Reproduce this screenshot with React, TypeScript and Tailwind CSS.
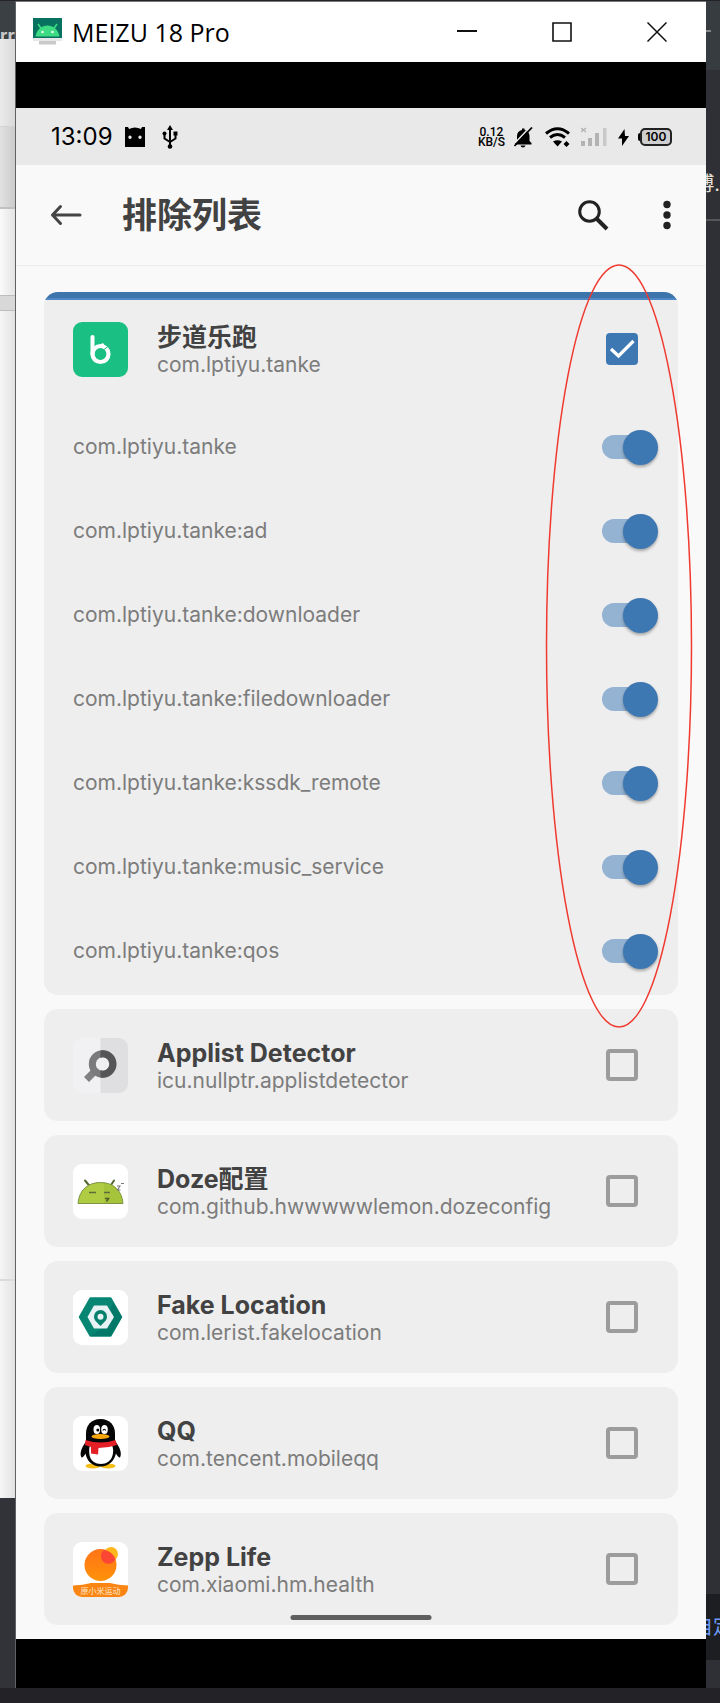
import React, { useState } from "react";

function TankeIcon() {
  return (
    <svg viewBox="0 0 55 55" className="h-[55px] w-[55px]" aria-hidden="true">
      <rect width="55" height="55" rx="9" fill="#1abf83" />
      <path d="M19.500 15v17" stroke="#fff" strokeWidth="4" strokeLinecap="round" />
      <circle cx="27.500" cy="32" r="8" fill="none" stroke="#fff" strokeWidth="4.200" />
      <path d="M27 22.500l3-1.500 2 3z" fill="#fff" />
      <path d="M31 27.500l4-3" stroke="#1abf83" strokeWidth="1" />
    </svg>
  );
}

function DetectorIcon() {
  return (
    <svg viewBox="0 0 55 55" className="h-[55px] w-[55px]" aria-hidden="true">
      <rect width="55" height="55" rx="9" fill="#f1f1f3" />
      <path d="M27.500 0H46a9 9 0 0 1 9 9v37a9 9 0 0 1-9 9H27.500z" fill="#dfdfe1" />
      <path d="M22.500 32.500L13.500 41.500" stroke="#818183" strokeWidth="7" />
      <circle cx="29.500" cy="26" r="10.200" fill="#f0f0f2" stroke="#7b7b7e" strokeWidth="7" />
      <path d="M27.500 12.500a13.700 13.700 0 1 1 0 27v-7.200a6.700 6.700 0 1 0 0-12.600z" fill="#555558" />
    </svg>
  );
}

function DozeIcon() {
  return (
    <svg viewBox="0 0 55 55" className="h-[55px] w-[55px]" aria-hidden="true">
      <rect width="55" height="55" rx="9" fill="#fff" />
      <path d="M12 16.500l5 6M41 16.500l-4 6" stroke="#55662f" strokeWidth="2" strokeLinecap="round" />
      <path d="M5 39.500C6 26 15 18.500 27.500 18.500S49 26 50 39.500z" fill="#b0cc42" stroke="#7d9445" strokeWidth="1" />
      <path d="M31 19c10 1 18 8 18.500 20H31z" fill="#98b832" opacity=".45" />
      <path d="M16 28.500h7M31 28.500h6" stroke="#5c6d39" strokeWidth="1.600" />
      <path d="M32 34.500h3.500l-2 3" fill="none" stroke="#4c5c24" strokeWidth="1.500" />
      <path d="M48 19.500h3M44 22h3l-2.500 4h3" fill="none" stroke="#777" strokeWidth="1.100" />
    </svg>
  );
}

function LocationIcon() {
  return (
    <svg viewBox="0 0 55 55" className="h-[55px] w-[55px]" aria-hidden="true">
      <rect width="55" height="55" rx="9" fill="#fff" />
      <path d="M17.500 8.500h20L48 27 37.500 45.500h-20L7 27z" fill="#068673" stroke="#068673" strokeWidth="2.500" strokeLinejoin="round" />
      <path d="M40 12l9 15-11 19H17l13-8z" fill="#00705f" opacity=".55" />
      <path d="M21 15.500h13L41 27l-7 11.500H21L14.500 27z" fill="#e6f2f3" />
      <path d="M27.500 20a6.500 6.500 0 0 0-6.500 6.800c0 4 4 6.400 6.500 9.200 2.500-2.800 6.500-5.200 6.500-9.200a6.500 6.500 0 0 0-6.500-6.800z" fill="#07806e" />
      <circle cx="27.500" cy="26.800" r="3" fill="#e6f2f3" />
    </svg>
  );
}

function PenguinIcon() {
  return (
    <svg viewBox="0 0 55 55" className="h-[55px] w-[55px]" aria-hidden="true">
      <rect width="55" height="55" rx="9" fill="#fff" />
      <ellipse cx="20" cy="50" rx="7.500" ry="2.500" fill="#f6bd16" />
      <ellipse cx="35" cy="50" rx="7.500" ry="2.500" fill="#f6bd16" />
      <path d="M13.500 25C8 32 6.500 38 8.500 41.500c1.500 0 3-2 4-4C14 45 19 50.500 27.500 50.500S41 45 43 37.500c1 2 2.500 4 4 4 2-3.500.5-9.500-5-16.500z" fill="#050505" />
      <path d="M27.500 3C18 3 13 9.500 13 17.500V27h29v-9.500C42 9.500 37 3 27.500 3z" fill="#050505" />
      <path d="M17 29h22c1.500 4 1.500 7 .5 10.500C38 45 33.500 48 28 48s-10.500-3-11.500-9C16 35 16 32 17 29z" fill="#fff" />
      <ellipse cx="23.800" cy="13.500" rx="3.300" ry="4.500" fill="#fff" />
      <ellipse cx="31.500" cy="13.500" rx="3.300" ry="4.500" fill="#fff" />
      <circle cx="24.800" cy="14" r="1.500" />
      <path d="M29.800 14.500q1.500-2.500 3 0" fill="none" stroke="#000" strokeWidth="1.200" />
      <ellipse cx="27.500" cy="20.500" rx="9" ry="2.600" fill="#f8a70d" />
      <path d="M12.500 24q15 5 30 0l1.500 5q-9 3-18.500 3l-.5 6.500-7-1V31l-6-2z" fill="#e51f26" />
    </svg>
  );
}

function ZeppIcon() {
  return (
    <span className="relative block h-[55px] w-[55px] overflow-hidden rounded-[9px] bg-white">
      <svg viewBox="0 0 55 55" className="h-[55px] w-[55px]" aria-hidden="true">
        <defs>
          <linearGradient id="zepp" x1="0" y1="0" x2="0" y2="1">
            <stop offset="0" stopColor="#ff7418" />
            <stop offset="1" stopColor="#ff9208" />
          </linearGradient>
        </defs>
        <circle cx="38" cy="12" r="7" fill="#ffb71b" />
        <circle cx="27.500" cy="23" r="16" fill="url(#zepp)" />
        <path d="M31.200 8A16 16 0 0 1 42.500 17a7.500 7.500 0 0 1-14.500-2.500 7 7 0 0 1 3.200-6.500z" fill="#fb4634" />
        <path d="M0 43.500q10-.5 18-2.500h19q8 2 18 2.500V55H0z" fill="#fa8512" />
      </svg>
      <span className="absolute inset-x-0 bottom-[1px] text-center text-[8px] leading-[10px] text-[#ffe9cf]">原小米运动</span>
    </span>
  );
}

function CheckBox({ id, checked, onChange }: { id: string; checked: boolean; onChange: () => void }) {
  return (
    <span className="mr-10 grid h-8 w-8 shrink-0">
      <input
        id={id}
        type="checkbox"
        checked={checked}
        onChange={onChange}
        className="col-start-1 row-start-1 m-0 h-8 w-8 appearance-none rounded-[4px] border-4 border-[#9c9c9c] checked:border-[#3e78b2] checked:bg-[#3e78b2]"
      />
      {checked && (
        <svg viewBox="0 0 32 32" className="pointer-events-none col-start-1 row-start-1 h-8 w-8" aria-hidden="true">
          <path d="M5 16l7.500 7L27.500 8" fill="none" stroke="#fff" strokeWidth="3.200" />
        </svg>
      )}
    </span>
  );
}

function ProcessRow({ name }: { name: string }) {
  const [on, setOn] = useState(true);
  return (
    <label className="flex h-[84px] items-center justify-between pr-5 pl-[29px]">
      <span className="text-[21px] leading-7 text-[#7c7c7c]">{name}</span>
      <span className="grid w-14 items-center">
        <input
          type="checkbox"
          role="switch"
          checked={on}
          onChange={() => setOn(!on)}
          className="col-start-1 row-start-1 m-0 h-6 w-[50px] appearance-none rounded-full bg-[#bdbdbd] checked:bg-[#94b2d2]"
        />
        <span
          className={
            on
              ? "pointer-events-none col-start-1 row-start-1 h-[35px] w-[35px] justify-self-end rounded-full bg-[#3e78b2] shadow-[0_2px_3px_rgba(0,0,0,0.3)]"
              : "pointer-events-none col-start-1 row-start-1 h-[35px] w-[35px] justify-self-start rounded-full bg-[#f5f5f5] shadow-[0_2px_3px_rgba(0,0,0,0.3)]"
          }
        />
      </span>
    </label>
  );
}

type AppInfo = { name: string; pkg: string; icon: React.ReactNode; processes?: string[] };

const apps: AppInfo[] = [
  {
    name: "步道乐跑",
    pkg: "com.lptiyu.tanke",
    icon: <TankeIcon />,
    processes: [
      "com.lptiyu.tanke",
      "com.lptiyu.tanke:ad",
      "com.lptiyu.tanke:downloader",
      "com.lptiyu.tanke:filedownloader",
      "com.lptiyu.tanke:kssdk_remote",
      "com.lptiyu.tanke:music_service",
      "com.lptiyu.tanke:qos",
    ],
  },
  { name: "Applist Detector", pkg: "icu.nullptr.applistdetector", icon: <DetectorIcon /> },
  { name: "Doze配置", pkg: "com.github.hwwwwwlemon.dozeconfig", icon: <DozeIcon /> },
  { name: "Fake Location", pkg: "com.lerist.fakelocation", icon: <LocationIcon /> },
  { name: "QQ", pkg: "com.tencent.mobileqq", icon: <PenguinIcon /> },
  { name: "Zepp Life", pkg: "com.xiaomi.hm.health", icon: <ZeppIcon /> },
];

function AppCard({ app }: { app: AppInfo }) {
  const [checked, setChecked] = useState(Boolean(app.processes));
  return (
    <li className="overflow-hidden rounded-[14px] bg-[#eeeeee]">
      {app.processes && <div className="h-2 border-b-2 border-[#5088c6] bg-[#3e74ac]" />}
      <div className={app.processes ? "flex h-[98px] items-center pl-[29px]" : "flex h-28 items-center pl-[29px]"}>
        {app.icon}
        <label htmlFor={app.pkg} className="ml-[29px] min-w-0 flex-1 pt-1">
          <span className="block text-[25px] leading-7 font-bold text-[#424242]">{app.name}</span>
          <span className="block text-[21px] leading-7 text-[#7c7c7c]">{app.pkg}</span>
        </label>
        <CheckBox id={app.pkg} checked={checked} onChange={() => setChecked(!checked)} />
      </div>
      {app.processes && (
        <div className="pt-[7px] pb-[2px]">
          {app.processes.map((p) => (
            <ProcessRow key={p} name={p} />
          ))}
        </div>
      )}
    </li>
  );
}

function TitleBar() {
  const button = "flex h-full w-[95px] items-center justify-center";
  return (
    <header className="flex h-[60px] items-center bg-white pr-[2px] pb-[1px] pl-[17px]">
      <svg viewBox="0 0 29 27" className="h-[27px] w-[29px]" aria-hidden="true">
        <path d="M0 0h29v20H0z" fill="#08715f" />
        <path d="M0 20h29v3H0z" fill="#e7e7e7" />
        <path d="M6 23h17v3.500H6z" fill="#c9c9c9" />
        <path d="M2.500 18.500C4 11 9 7.500 14.500 7.500S25 11 26.500 18.500z" fill="#3ddc84" />
        <path d="M5 6l3.500 5M24 6l-3.500 5" stroke="#3ddc84" strokeWidth="1.600" />
        <circle cx="9.500" cy="14" r="1.300" fill="#e9fff2" />
        <circle cx="19.500" cy="14" r="1.300" fill="#e9fff2" />
      </svg>
      <h1 className="ml-[10px] flex-1 font-['Open_Sans'] text-[25px] leading-8 text-black">MEIZU 18 Pro</h1>
      <button className={button} aria-label="最小化">
        <svg viewBox="0 0 20 20" className="h-5 w-5"><path d="M0 9h20" stroke="#111" strokeWidth="2" /></svg>
      </button>
      <button className={button} aria-label="最大化">
        <svg viewBox="0 0 20 20" className="h-5 w-5"><path d="M1 1h18v18H1z" fill="none" stroke="#111" strokeWidth="1.600" /></svg>
      </button>
      <button className={button} aria-label="关闭">
        <svg viewBox="0 0 20 20" className="h-5 w-5"><path d="M.5.5l19 19M19.500.5l-19 19" stroke="#111" strokeWidth="1.500" /></svg>
      </button>
    </header>
  );
}

function StatusBar() {
  return (
    <div className="flex h-[57px] items-center bg-[#e9e9e9] pt-[1px] pr-[34px] pl-[35px] text-black">
      <time className="text-[24px] leading-7">13:09</time>
      <svg viewBox="0 0 20 20" className="ml-[12px] h-5 w-5" aria-hidden="true">
        <path fillRule="evenodd" d="M0 0h3l1 2q6-3 12 0l1-2h3v20H0zM5 8.500a1.700 1.700 0 1 0 0 3.400 1.700 1.700 0 0 0 0-3.400zM15 8.500a1.700 1.700 0 1 0 0 3.400 1.700 1.700 0 0 0 0-3.400z" />
      </svg>
      <svg viewBox="0 0 16 24" className="ml-[17px] h-6 w-4" aria-hidden="true">
        <path d="M8 3v18M2.500 9v4.500L8 17M13.500 8v5.500L8 17" fill="none" stroke="#000" strokeWidth="2" />
        <path d="M8 0l3 5H5zM11.500 6.500h4v4h-4z" />
        <circle cx="2.500" cy="8.500" r="2" />
        <circle cx="8" cy="21.500" r="2.300" />
      </svg>
      <div className="flex-1" />
      <div className="text-center font-['Roboto'] text-[12px] leading-[10px] font-medium">
        <div>0.12</div>
        <div>KB/S</div>
      </div>
      <svg viewBox="0 0 19 21" className="ml-[9px] h-[21px] w-[19px]" aria-hidden="true">
        <path d="M1 17.500v-1.500l2-2V9c0-3 2-5.500 5-6V1.500h2.500V3c3 .5 5 3 5 6v5l2 2v1.500zM6.500 18.500h5q-.5 2-2.500 2t-2.500-2z" />
        <path d="M1 16L16 0" stroke="#e9e9e9" strokeWidth="1.600" />
        <path d="M.5 19L18 .5" stroke="#000" strokeWidth="1.700" />
      </svg>
      <svg viewBox="0 0 25 20" className="ml-[12px] h-5 w-[25px]" aria-hidden="true">
        <path d="M1 6.500Q12.500-3 24 6.500M5 10.500q7.500-6 15 0" fill="none" stroke="#000" strokeWidth="3" />
        <path d="M8 14.500q4.500-2.500 9 0l-4.500 5zM21.500 14l3 3-3 3-3-3z" />
      </svg>
      <svg viewBox="0 0 26 20" className="ml-[11px] h-5 w-[26px]" aria-hidden="true">
        <path d="M0 14h4v5H0zM7 11h4v8H7zM14 6h4v13h-4z" fill="#b3b3b3" />
        <path d="M22 1h3.500v18H22z" fill="#c8c8c8" />
        <path d="M0 1l5 4M5 1L0 5" stroke="#b3b3b3" strokeWidth="1.500" />
      </svg>
      <svg viewBox="0 0 11 17" className="ml-[11px] h-[17px] w-[11px]" aria-hidden="true">
        <path d="M6.500 0L0 9.500h4L4 17l7-10H7z" />
      </svg>
      <div className="ml-[9px] flex items-center">
        <span className="h-2 w-[2px] rounded-l bg-black" />
        <span className="flex h-[18px] w-8 items-center justify-center rounded-[5px] border-2 border-[#222] bg-[#cfcfcf] text-[12px] leading-[14px] font-semibold">
          100
        </span>
      </div>
    </div>
  );
}

function AppBar() {
  return (
    <div className="flex h-[101px] items-center border-b border-[#ececec] pr-[34px] pl-[34px]">
      <button aria-label="返回">
        <svg viewBox="0 0 32 22" className="h-[22px] w-8">
          <path d="M30 11H2.500M10.500 2.500L2.500 11l8 8.500" fill="none" stroke="#444" strokeWidth="3" strokeLinecap="round" strokeLinejoin="round" />
        </svg>
      </button>
      <h2 className="ml-10 flex-1 text-[35px] leading-[48px] font-bold text-[#424242]">排除列表</h2>
      <button aria-label="搜索">
        <svg viewBox="0 0 31 31" className="h-[31px] w-[31px]">
          <circle cx="11.500" cy="11.500" r="9.800" fill="none" stroke="#222" strokeWidth="3" />
          <path d="M18.500 18.500L29 29" stroke="#222" strokeWidth="4" />
        </svg>
      </button>
      <button aria-label="更多" className="ml-[53px]">
        <svg viewBox="0 0 10 30" className="h-[30px] w-[10px]" fill="#222">
          <circle cx="5" cy="4.500" r="3.700" />
          <circle cx="5" cy="15" r="3.700" />
          <circle cx="5" cy="25.500" r="3.700" />
        </svg>
      </button>
    </div>
  );
}

export default function App() {
  return (
    <div className="flex min-h-screen flex-col bg-[#232227] pt-[1px] font-['Inter','Noto_Sans_CJK_SC',sans-serif]">
      <div className="flex">
        <aside className="flex w-4 shrink-0 flex-col overflow-hidden border-r border-[#606164] bg-[#323338]">
          <div className="flex h-[38px] shrink-0 items-end overflow-hidden bg-[#3b4045]">
            <span className="h-[10px] text-[18px] leading-[14px] font-bold text-[#c9c9c9]">rro</span>
          </div>
          <div className="h-[88px] border-b border-[#d2d2d2] bg-linear-to-r from-[#ebebeb] to-[#d9d9d9]" />
          <div className="h-[82px] border-b-2 border-[#c0c0c0] bg-linear-to-r from-[#e2e2e2] to-[#cbcbcb]" />
          <div className="h-[86px] bg-linear-to-r from-[#fafafa] to-[#e4e4e4]" />
          <div className="h-4 border-y border-[#bdbdbd] bg-[#d8d8d8]" />
          <div className="h-[970px] border-b-2 border-[#dadada] bg-linear-to-r from-[#f6f6f6] to-[#e2e2e2]" />
          <div className="h-[217px] bg-linear-to-r from-[#f6f6f6] to-[#e2e2e2]" />
        </aside>

        <div className="flex min-w-0 flex-1 flex-col border-t border-[#77787a] bg-[#f9f9f9]">
          <TitleBar />
          <div className="h-[46px] bg-black" />
          <StatusBar />
          <AppBar />
          <main className="relative px-7 pt-[26px] pb-[14px]">
            <ul className="flex flex-col gap-[14px]">
              {apps.map((app) => (
                <AppCard key={app.pkg} app={app} />
              ))}
            </ul>
            <svg
              viewBox="0 0 148 766"
              className="pointer-events-none absolute top-[-3px] right-[13px] h-[766px] w-[148px]"
              aria-hidden="true"
            >
              <ellipse cx="74" cy="383" rx="72.500" ry="381" fill="none" stroke="#f03a30" strokeWidth="1.500" />
            </svg>
            <div className="absolute bottom-[19px] left-1/2 h-[5px] w-[141px] -translate-x-1/2 rounded-full bg-[#5f5f5f]" />
          </main>
          <div className="h-[49px] bg-black" />
        </div>

        <aside className="flex w-[14px] shrink-0 flex-col overflow-hidden bg-[#2f3035]">
          <div className="flex h-[69px] items-center bg-[#363c40] pb-[9px]">
            <span className="h-[2px] w-[5px] bg-[#85888a]" />
          </div>
          <div className="flex h-[151px] justify-end overflow-hidden border-b-2 border-[#55565a] pt-[100px] text-[20px] leading-7 whitespace-nowrap text-[#e6e0d8]">
            博.
          </div>
          <div className="h-[1373px] shrink-0" />
          <div className="flex h-[66px] shrink-0 items-center justify-center overflow-hidden bg-[#1d1e21] text-[20px] leading-7 whitespace-nowrap text-[#6c9cf5]">
            自定
          </div>
        </aside>
      </div>
    </div>
  );
}
